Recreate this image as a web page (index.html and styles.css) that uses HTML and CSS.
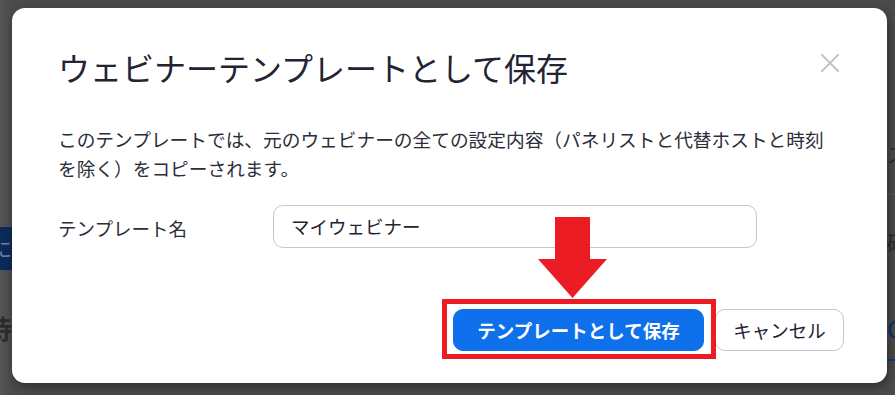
FILE: index.html
```html
<!DOCTYPE html>
<html lang="ja">
<head>
<meta charset="utf-8">
<title>ウェビナーテンプレートとして保存</title>
<link rel="stylesheet" href="styles.css">
</head>
<body>
<div class="page">
  <div class="bg-left">
    <div class="bg-bar">に</div>
    <div class="bg-text">待</div>
  </div>
  <div class="bg-right">
    <div class="bg-r-text first">ス</div>
    <div class="bg-r-line"></div>
    <div class="bg-r-text second">確</div>
    <div class="bg-r-q">Q</div>
    <div class="bg-r-blueline"></div>
  </div>
</div>

<div class="modal" role="dialog">
  <div class="modal-header">
    <h1 class="modal-title">ウェビナーテンプレートとして保存</h1>
    <button class="close" aria-label="閉じる">
      <svg width="18" height="18" viewBox="0 0 18 18"><path d="M1 1 L17 17 M17 1 L1 17" stroke="#c4c4c4" stroke-width="2" fill="none" stroke-linecap="round"/></svg>
    </button>
  </div>
  <p class="desc">このテンプレートでは、元のウェビナーの全ての設定内容（パネリストと代替ホストと時刻を除く）をコピーされます。</p>
  <div class="form-row">
    <label class="label">テンプレート名</label>
    <div class="input">マイウェビナー</div>
  </div>
  <div class="footer">
    <span class="primary-wrap">
      <svg class="arrow" width="69" height="81" viewBox="0 0 69 81"><path d="M17 0 H52 V42 H69 L34.5 81 L0 42 H17 Z" fill="#ec1c24"/></svg>
      <button class="btn primary">テンプレートとして保存</button>
    </span>
    <button class="btn secondary">キャンセル</button>
  </div>
</div>
</body>
</html>
```

FILE: styles.css
```css
html, body {
  margin: 0;
  padding: 0;
}
body {
  width: 895px;
  height: 395px;
  overflow: hidden;
  background: #4a4a4a;
  font-family: "Noto Sans CJK JP", "Noto Sans", sans-serif;
  position: relative;
}
.page {
  display: flex;
  justify-content: space-between;
  height: 395px;
}
.bg-left {
  width: 12px;
  background: linear-gradient(90deg, #555 0%, #4a4a4a 100%);
}
.bg-bar {
  margin-top: 227px;
  height: 43px;
  background: #0b2a57;
  color: #6f7f99;
  font-size: 20px;
  line-height: 43px;
  text-indent: -8px;
  overflow: hidden;
}
.bg-text {
  margin-top: 41px;
  color: #2c2c2c;
  font-size: 26px;
  line-height: 34px;
  font-weight: 700;
  text-indent: -14px;
  overflow: hidden;
}
.bg-right {
  width: 8px;
  overflow: hidden;
}
.bg-r-text {
  color: #2a2a2a;
  font-size: 20px;
  line-height: 24px;
  white-space: nowrap;
}
.bg-r-text.first { margin-top: 143px; }
.bg-r-line {
  margin-top: 27px;
  height: 1px;
  background: #565656;
}
.bg-r-text.second { margin-top: 36px; }
.bg-r-q {
  margin-top: 60px;
  color: #133463;
  font-size: 28px;
  line-height: 30px;
  font-family: "Liberation Sans", sans-serif;
}
.bg-r-blueline {
  margin-top: 14px;
  height: 2px;
  background: #1a3a6a;
}

.modal {
  position: absolute;
  left: 12px;
  top: 8px;
  width: 875px;
  height: 375px;
  box-sizing: border-box;
  padding: 39px 43px 0 46px;
  background: #fff;
  border-radius: 13px;
  box-shadow: 2px 4px 10px rgba(0, 0, 0, 0.35);
  color: #232333;
}
.modal-header {
  display: flex;
  justify-content: space-between;
  align-items: flex-start;
  padding-right: 5px;
}
.modal-title {
  margin: 0;
  font-size: 32px;
  line-height: 40px;
  font-weight: 400;
  color: #232333;
}
.close {
  margin-top: 7px;
  padding: 0;
  border: none;
  background: none;
  width: 18px;
  height: 18px;
  display: flex;
}
.desc {
  margin: 38px 0 0 0;
  max-width: 781px;
  font-size: 18.7px;
  line-height: 28.5px;
  color: #2d2d3a;
}
.form-row {
  display: flex;
  align-items: center;
  margin-top: 23px;
}
.label {
  width: 215px;
  font-size: 18.5px;
  line-height: 26px;
  color: #2d2d3a;
  padding-top: 3px;
}
.input {
  width: 484px;
  height: 43px;
  box-sizing: border-box;
  border: 1px solid #c8c4d8;
  border-radius: 10px;
  padding-left: 17px;
  font-size: 18.5px;
  line-height: 41px;
  color: #232333;
}
.footer {
  display: flex;
  justify-content: flex-end;
  gap: 11px;
  margin-top: 61px;
}
.primary-wrap {
  position: relative;
  display: flex;
}
.primary-wrap::after {
  content: "";
  position: absolute;
  left: -11px;
  top: -10px;
  right: -12px;
  bottom: -8px;
  border: 5px solid #ec1c24;
}
.arrow {
  position: absolute;
  left: 85px;
  top: -92px;
}
.btn {
  height: 42px;
  box-sizing: border-box;
  border-radius: 10px;
  font-family: "Noto Sans CJK JP", "Noto Sans", sans-serif;
  font-size: 18.5px;
  line-height: 40px;
  padding: 0;
  cursor: pointer;
}
.primary {
  width: 251px;
  background: #0e71eb;
  border: 1px solid #0e71eb;
  color: #fff;
  font-weight: 600;
}
.secondary {
  width: 129px;
  background: #fff;
  border: 1px solid #c8c4d8;
  color: #232333;
  font-weight: 400;
}
```
